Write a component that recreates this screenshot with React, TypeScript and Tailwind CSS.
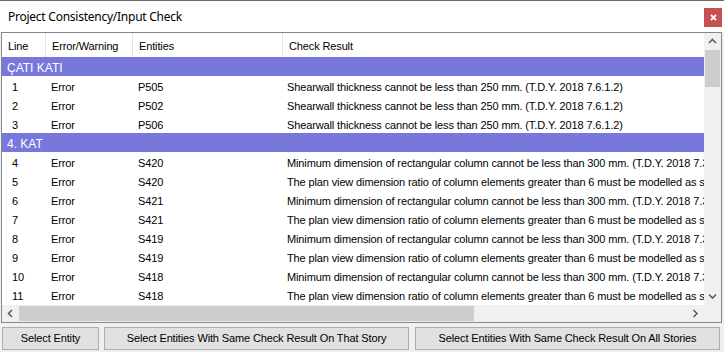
import React from "react";

type Row =
  | { kind: "group"; label: string }
  | { kind: "row"; line: string; type: string; entity: string; result: string };

const SHEAR = "Shearwall thickness cannot be less than 250 mm. (T.D.Y. 2018 7.6.1.2)";
const MIN = "Minimum dimension of rectangular column cannot be less than 300 mm. (T.D.Y. 2018 7.3.4.1)";
const PLAN = "The plan view dimension ratio of column elements greater than 6 must be modelled as shearwall.";

const rows: Row[] = [
  { kind: "group", label: "ÇATI KATI" },
  { kind: "row", line: "1", type: "Error", entity: "P505", result: SHEAR },
  { kind: "row", line: "2", type: "Error", entity: "P502", result: SHEAR },
  { kind: "row", line: "3", type: "Error", entity: "P506", result: SHEAR },
  { kind: "group", label: "4. KAT" },
  { kind: "row", line: "4", type: "Error", entity: "S420", result: MIN },
  { kind: "row", line: "5", type: "Error", entity: "S420", result: PLAN },
  { kind: "row", line: "6", type: "Error", entity: "S421", result: MIN },
  { kind: "row", line: "7", type: "Error", entity: "S421", result: PLAN },
  { kind: "row", line: "8", type: "Error", entity: "S419", result: MIN },
  { kind: "row", line: "9", type: "Error", entity: "S419", result: PLAN },
  { kind: "row", line: "10", type: "Error", entity: "S418", result: MIN },
  { kind: "row", line: "11", type: "Error", entity: "S418", result: PLAN },
];

const cellFont = { fontFamily: '"Liberation Sans", Arial, sans-serif' };

function Chevron({ dir }: { dir: "up" | "down" | "left" | "right" }) {
  const paths: Record<string, string> = {
    up: "M1 5 L4.5 1.5 L8 5",
    down: "M1 1.5 L4.5 5 L8 1.5",
    left: "M5 1 L1.5 4.5 L5 8",
    right: "M1.5 1 L5 4.5 L1.5 8",
  };
  const vertical = dir === "up" || dir === "down";
  return (
    <svg
      width={vertical ? 9 : 7}
      height={vertical ? 7 : 9}
      viewBox={vertical ? "0 0 9 7" : "0 0 7 9"}
      fill="none"
      stroke="#606060"
      strokeWidth="1.6"
    >
      <path d={paths[dir]} />
    </svg>
  );
}

export default function App() {
  return (
    <div className="w-[724px] h-[352px] bg-[#f0f0f0] flex flex-col overflow-hidden" style={cellFont}>
      <div className="h-px bg-[#6b6b6b]" />
      <div className="h-[31px] bg-white flex items-center justify-between">
        <span
          className="pl-[8px] text-[12px] tracking-[-0.25px] text-black leading-none"
          style={{ fontFamily: '"Noto Sans", "Open Sans", sans-serif' }}
        >
          Project Consistency/Input Check
        </span>
        <div className="w-[18px] h-[19px] bg-[#c75050] mr-[2px] mt-[2px] flex items-center justify-center">
          <svg width="7" height="7" viewBox="0 0 7 7" stroke="white" strokeWidth="1.8">
            <path d="M1 1 L6 6 M6 1 L1 6" />
          </svg>
        </div>
      </div>

      <div className="ml-px w-[721px] h-[291px] border border-[#828790] bg-white flex flex-col">
        <div className="flex h-[272px]">
          <div className="w-[702px] flex flex-col overflow-hidden">
            <div className="h-[24px] flex text-[11px] tracking-[-0.13px] text-black shrink-0">
              <div className="w-[44px] pl-[6px] pt-[2px] flex items-center border-r border-[#e5e5e5]">Line</div>
              <div className="w-[87px] pl-[6px] pt-[2px] flex items-center border-r border-[#e5e5e5]">Error/Warning</div>
              <div className="w-[150px] pl-[6px] pt-[2px] flex items-center border-r border-[#e5e5e5]">Entities</div>
              <div className="flex-1 pl-[6px] pt-[2px] flex items-center">Check Result</div>
            </div>
            {rows.map((r, i) =>
              r.kind === "group" ? (
                <div
                  key={i}
                  className="h-[19px] shrink-0 bg-[#7878dc] text-white text-[12px] pl-[5px] pt-[2px] flex items-center"
                >
                  {r.label}
                </div>
              ) : (
                <div
                  key={i}
                  className="h-[19px] shrink-0 flex items-center pt-[3px] text-[11px] tracking-[-0.13px] text-black whitespace-nowrap"
                >
                  <div className="w-[44px] pl-[10px]">{r.line}</div>
                  <div className="w-[87px] pl-[5px]">{r.type}</div>
                  <div className="w-[150px] pl-[5px]">{r.entity}</div>
                  <div className="flex-1 pl-[4px] overflow-hidden">{r.result}</div>
                </div>
              )
            )}
          </div>
          <div className="w-[17px] bg-[#f0f0f0] flex flex-col items-center">
            <div className="h-[17px] flex items-center justify-center">
              <Chevron dir="up" />
            </div>
            <div className="w-[15px] h-[37px] bg-[#cdcdcd]" />
            <div className="flex-1" />
            <div className="h-[17px] flex items-center justify-center">
              <Chevron dir="down" />
            </div>
          </div>
        </div>
        <div className="flex h-[17px]">
          <div className="w-[702px] bg-[#f0f0f0] flex items-center">
            <div className="w-[17px] flex items-center justify-center">
              <Chevron dir="left" />
            </div>
            <div className="w-[455px] h-[15px] bg-[#cdcdcd]" />
            <div className="flex-1" />
            <div className="w-[17px] flex items-center justify-center">
              <Chevron dir="right" />
            </div>
          </div>
          <div className="w-[17px] bg-[#f0f0f0]" />
        </div>
      </div>

      <div className="mt-[4px] flex pl-[2px] text-[11px] tracking-[-0.13px] text-black">
        <div className="w-[97px] h-[23px] bg-[#e1e1e1] border border-[#adadad] flex items-center justify-center">
          Select Entity
        </div>
        <div className="ml-[5px] w-[305px] h-[23px] bg-[#e1e1e1] border border-[#adadad] flex items-center justify-center">
          Select Entities With Same Check Result On That Story
        </div>
        <div className="ml-[6px] w-[305px] h-[23px] bg-[#e1e1e1] border border-[#adadad] flex items-center justify-center">
          Select Entities With Same Check Result On All Stories
        </div>
      </div>
    </div>
  );
}
